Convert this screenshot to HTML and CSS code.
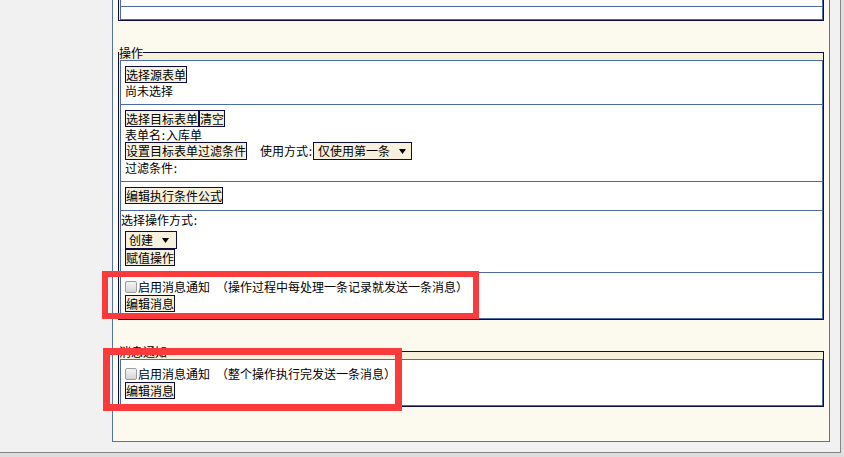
FILE: index.html
```html
<!DOCTYPE html>
<html lang="zh-CN">
<head>
<meta charset="utf-8">
<title>操作设置</title>
<link rel="stylesheet" href="styles.css">
</head>
<body>
<div class="frame">
  <div class="panel">
    <fieldset class="fs">
      <div class="grid">
        <div class="row row-prev-a"></div>
        <div class="row row-prev-b"></div>
      </div>
    </fieldset>

    <fieldset class="fs">
      <legend>操作</legend>
      <div class="grid">
        <div class="row">
          <div class="line lb"><button class="btn" type="button">选择源表单</button></div>
          <div class="line">尚未选择</div>
        </div>
        <div class="row">
          <div class="line lb"><button class="btn" type="button">选择目标表单</button><button class="btn" type="button">清空</button></div>
          <div class="line">表单名<span class="colon">:</span>入库单</div>
          <div class="line ls"><button class="btn btn-tall" type="button">设置目标表单过滤条件</button><span class="label">使用方式<span class="colon">:</span></span><span class="select sel-wide"><span>仅使用第一条</span><svg class="arrow" width="7" height="5" viewBox="0 0 7 5"><polygon points="0,0 7,0 3.5,5" fill="#000"/></svg></span></div>
          <div class="line">过滤条件<span class="colon">:</span></div>
        </div>
        <div class="row">
          <div class="line lb"><button class="btn" type="button">编辑执行条件公式</button></div>
        </div>
        <div class="row row-ops">
          <div class="line">选择操作方式<span class="colon">:</span></div>
          <div class="ops">
            <div class="line ls"><span class="select sel-narrow"><span>创建</span><svg class="arrow" width="7" height="5" viewBox="0 0 7 5"><polygon points="0,0 7,0 3.5,5" fill="#000"/></svg></span></div>
            <div class="line lb"><button class="btn" type="button">赋值操作</button></div>
          </div>
        </div>
        <div class="row">
          <label class="line lc"><input type="checkbox" class="chk">启用消息通知<span class="hint">（操作过程中每处理一条记录就发送一条消息）</span></label>
          <div class="line lb"><button class="btn" type="button">编辑消息</button></div>
        </div>
      </div>
    </fieldset>

    <fieldset class="fs fs-last">
      <legend>消息通知</legend>
      <div class="grid">
        <div class="row">
          <label class="line lc"><input type="checkbox" class="chk">启用消息通知<span class="hint">（整个操作执行完发送一条消息）</span></label>
          <div class="line lb"><button class="btn" type="button">编辑消息</button></div>
        </div>
      </div>
    </fieldset>
  </div>

  <div class="mark mark-1"></div>
  <div class="mark mark-2"></div>
</div>
</body>
</html>
```

FILE: styles.css
```css
* { box-sizing: border-box; }

html, body {
  margin: 0;
  padding: 0;
}

body {
  background: #dedede;
  font-family: "Noto Sans CJK SC", "Liberation Sans", sans-serif;
  font-size: 12px;
  color: #000;
  text-spacing-trim: space-all;
  font-kerning: none;
}

.frame {
  position: relative;
  width: 841px;
  height: 453px;
  background: #f1f1f1;
  border-right: 1px solid #868686;
  border-bottom: 1px solid #868686;
  overflow: hidden;
}

.panel {
  width: 718px;
  margin: -40px 0 0 112px;
  padding: 0 5px 34px;
  border: 1px solid #5673a6;
  background: #fcf9ef;
}

.fs {
  margin: 0 0 24px;
  padding: 0;
  min-width: 0;
  border: 1px solid #0c0c40;
  background: #f7f1dc;
}

.fs-last { margin-bottom: 0; }

legend {
  padding: 0;
  margin: 0;
  height: 15px;
  line-height: 15px;
  font-size: 12px;
}

.grid {
  margin-left: 1px;
  border: 1px solid #4d6ca5;
  background: #fff;
}

.row {
  padding: 5px 4px 6px;
}

.row + .row {
  border-top: 1px solid #4d6ca5;
}

.row-prev-a {
  padding: 0;
  height: 43px;
}

.row-prev-b {
  padding: 0;
  height: 13px;
}

.row-ops {
  padding: 1px 0 6px;
}

.ops {
  padding: 4px 0 0 4px;
}

.line {
  display: block;
  height: 15px;
  line-height: 15px;
  white-space: nowrap;
}

.lb {
  display: flex;
  height: 17px;
}

.ls {
  display: flex;
  align-items: flex-start;
  height: 18px;
}

.lc {
  display: flex;
  align-items: center;
  height: 17px;
}

.hint {
  margin-left: 6px;
}

.colon {
  display: inline-block;
  width: 5px;
  text-align: center;
}

.btn {
  font: inherit;
  font-size: 12px;
  height: 17px;
  line-height: 15px;
  padding: 0;
  margin: 0;
  border: 1px solid #0c0c40;
  border-radius: 0;
  background: #f6f0dc;
  color: #000;
}

.btn-tall {
  height: 18px;
  line-height: 16px;
}

.label {
  margin-left: 13px;
  line-height: 18px;
}

.select {
  display: inline-flex;
  align-items: center;
  justify-content: space-between;
  height: 18px;
  line-height: 16px;
  border: 1px solid #0c0c40;
  background: #f6f0dc;
}

.sel-wide {
  width: 99px;
  padding: 0 5px 0 4px;
}

.sel-narrow {
  width: 52px;
  padding: 0 7px 0 3px;
}

.arrow {
  display: block;
}

.chk {
  -webkit-appearance: none;
  appearance: none;
  width: 12px;
  height: 12px;
  margin: 0 1px 0 0;
  border: 1px solid #9b9b9b;
  border-radius: 2px;
  background: linear-gradient(#f4f4f4, #d4d4d4);
}

.mark {
  position: absolute;
  border: 6px solid #fb3b3b;
}

.mark-1 {
  left: 102px;
  top: 271px;
  width: 377px;
  height: 48px;
}

.mark-2 {
  left: 103px;
  top: 348px;
  width: 299px;
  height: 63px;
  border-width: 7px;
}
```
